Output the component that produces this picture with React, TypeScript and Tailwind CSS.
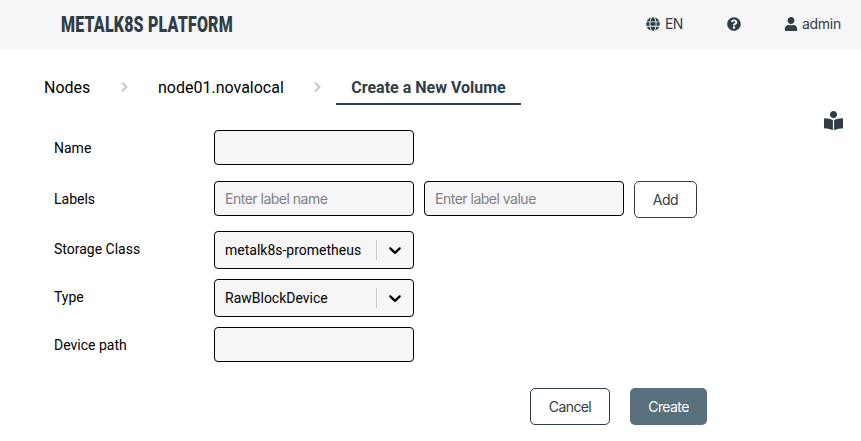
import React from "react";
import { FaGlobe, FaQuestionCircle, FaUser, FaBookReader } from "react-icons/fa";

const fieldBox = "w-[200px] rounded-[4px] border border-black bg-[#f6f6f9]";
const inputClass =
  fieldBox +
  " h-[35px] px-[10px] font-[Inter,sans-serif] text-[14px] tracking-[-0.5px] text-black outline-none placeholder:text-[#808080]";

function Label({ children }: { children: React.ReactNode }) {
  return <span className="w-[160px] shrink-0 text-[14px] leading-5 text-black">{children}</span>;
}

function Separator() {
  return (
    <svg className="h-[10px] w-[7px] shrink-0" viewBox="0 0 7 10" fill="none" stroke="#c3c9cd" strokeWidth="2">
      <path d="M1 0.6L5.4 5L1 9.4" />
    </svg>
  );
}

function Select({ value }: { value: string }) {
  return (
    <div className={fieldBox + " flex h-[38px] items-center pl-[10px] text-[14px]"}>
      <span className="flex-1 whitespace-nowrap">{value}</span>
      <span className="h-5 w-px bg-[#cccccc]" />
      <svg className="mx-2 size-5" viewBox="0 0 20 20" fill="black">
        <path d="M4.516 7.548c0.436-0.446 1.043-0.481 1.576 0l3.908 3.747 3.908-3.747c0.533-0.481 1.141-0.446 1.574 0 0.436 0.445 0.408 1.197 0 1.615-0.406 0.418-4.695 4.502-4.695 4.502-0.217 0.223-0.502 0.335-0.787 0.335s-0.57-0.112-0.789-0.335c0 0-4.287-4.084-4.695-4.502s-0.436-1.17 0-1.615z" />
      </svg>
    </div>
  );
}

export default function App() {
  return (
    <div className="h-[441px] w-[861px] overflow-hidden bg-white font-[Roboto,sans-serif] text-black">
      <header className="flex h-[49px] items-center bg-[#f6f6f9] pl-[61px] text-[#2f3e46]">
        <h1 className="w-[585px] pb-px text-[22.5px] leading-[48px] font-black whitespace-nowrap">
          <span className="inline-block origin-left scale-x-[0.71] tracking-[0.27px]">METALK8S PLATFORM</span>
        </h1>
        <div className="flex items-center pb-[2px] font-[Inter,sans-serif] text-[14px]">
          <span className="flex w-[81px] items-center gap-[5px]">
            <FaGlobe size={14} />
            <span className="tracking-[-0.7px]">EN</span>
          </span>
          <span className="w-[58px]">
            <FaQuestionCircle size={14} />
          </span>
          <span className="flex items-center gap-1">
            <FaUser size={14} className="-ml-px" />
            <span className="tracking-[-0.3px]">admin</span>
          </span>
        </div>
      </header>

      <nav className="flex h-[56px] items-end pl-[44px] text-[16px]">
        <span className="w-[77px] pb-[5px]">Nodes</span>
        <span className="w-[37px] pb-[13px]"><Separator /></span>
        <span className="w-[156px] pb-[5px]">node01.novalocal</span>
        <span className="w-[22px] pb-[13px]"><Separator /></span>
        <span className="w-[185px] border-b-2 border-[#2f3e46] pb-[3px] text-center font-bold whitespace-nowrap text-[#2f3e46]">
          Create a New Volume
        </span>
      </nav>

      <div className="flex h-[25px] items-end justify-end pr-[18px] text-[#2f3e46]">
        <FaBookReader size={19} />
      </div>

      <form className="pl-[54px]" onSubmit={(e) => e.preventDefault()}>
        <div className="flex h-[35px] items-center">
          <Label>Name</Label>
          <input className={inputClass} />
        </div>
        <div className="mt-4 flex h-[37px] items-start">
          <div className="flex h-[35px] items-center">
            <Label>Labels</Label>
            <input className={inputClass} placeholder="Enter label name" />
            <input className={inputClass + " ml-[10px]"} placeholder="Enter label value" />
          </div>
          <button className="ml-[10px] h-[37px] w-[63px] rounded-[5px] border border-[#2f3e46] bg-white font-[Inter,sans-serif] text-[14px] tracking-[-0.4px] text-[#2f3e46]">
            Add
          </button>
        </div>
        <div className="mt-[13px] flex h-[38px] items-start">
          <div className="pt-2 flex"><Label>Storage Class</Label></div>
          <Select value="metalk8s-prometheus" />
        </div>
        <div className="mt-[10px] flex h-[38px] items-start">
          <div className="pt-2 flex"><Label>Type</Label></div>
          <Select value="RawBlockDevice" />
        </div>
        <div className="mt-[10px] flex h-[35px] items-center">
          <Label>Device path</Label>
          <input className={inputClass} />
        </div>
        <div className="mt-[26px] flex gap-5 pl-[476px] font-[Inter,sans-serif] text-[14px] tracking-[-0.6px]">
          <button className="h-[37px] w-[80px] rounded-[5px] border border-[#2f3e46] bg-white text-[#2f3e46]">Cancel</button>
          <button className="h-[37px] w-[77px] rounded-[5px] bg-[#586f7c] text-white">Create</button>
        </div>
      </form>
    </div>
  );
}
